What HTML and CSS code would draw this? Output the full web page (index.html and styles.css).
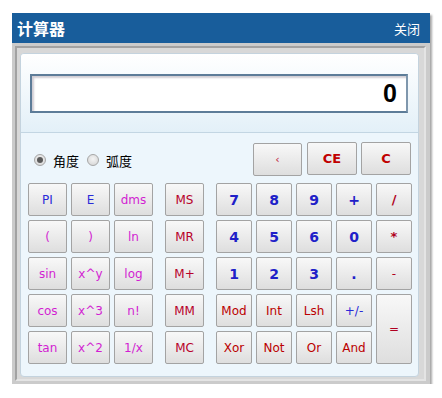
FILE: index.html
```html
<!DOCTYPE html>
<html lang="zh">
<head>
<meta charset="utf-8">
<title>计算器</title>
<link rel="stylesheet" href="styles.css">
</head>
<body>
<div class="window">
  <div class="titlebar">
    <span class="title">计算器</span>
    <span class="close">关闭</span>
  </div>
  <div class="wbody">
    <div class="frame">
      <div class="panel">
        <div class="screen-area">
          <div class="display">0</div>
        </div>
        <div class="keys-area">
          <div class="toprow">
            <div class="radios">
              <span class="radio checked"></span><span class="rlabel">角度</span>
              <span class="radio"></span><span class="rlabel">弧度</span>
            </div>
            <div class="edit-keys">
              <button class="btn back">‹</button>
              <button class="btn ce">CE</button>
              <button class="btn ce">C</button>
            </div>
          </div>
          <div class="grid">
            <button class="btn blue">PI</button>
            <button class="btn blue">E</button>
            <button class="btn mag">dms</button>
            <span></span>
            <button class="btn mem">MS</button>
            <span></span>
            <button class="btn num">7</button>
            <button class="btn num">8</button>
            <button class="btn num">9</button>
            <button class="btn num">+</button>
            <button class="btn opb">/</button>

            <button class="btn mag">(</button>
            <button class="btn mag">)</button>
            <button class="btn mag">ln</button>
            <span></span>
            <button class="btn mem">MR</button>
            <span></span>
            <button class="btn num">4</button>
            <button class="btn num">5</button>
            <button class="btn num">6</button>
            <button class="btn num">0</button>
            <button class="btn opb">*</button>

            <button class="btn mag">sin</button>
            <button class="btn mag">x^y</button>
            <button class="btn mag">log</button>
            <span></span>
            <button class="btn mem">M+</button>
            <span></span>
            <button class="btn num">1</button>
            <button class="btn num">2</button>
            <button class="btn num">3</button>
            <button class="btn num">.</button>
            <button class="btn op">-</button>

            <button class="btn mag">cos</button>
            <button class="btn mag">x^3</button>
            <button class="btn mag">n!</button>
            <span></span>
            <button class="btn mem">MM</button>
            <span></span>
            <button class="btn red">Mod</button>
            <button class="btn red">Int</button>
            <button class="btn red">Lsh</button>
            <button class="btn blue">+/-</button>
            <button class="btn op eq">=</button>

            <button class="btn mag">tan</button>
            <button class="btn mag">x^2</button>
            <button class="btn mag">1/x</button>
            <span></span>
            <button class="btn mem">MC</button>
            <span></span>
            <button class="btn red">Xor</button>
            <button class="btn red">Not</button>
            <button class="btn red">Or</button>
            <button class="btn red">And</button>
          </div>
        </div>
      </div>
    </div>
  </div>
</div>
</body>
</html>
```
FILE: styles.css
```css
html, body {
  margin: 0;
  padding: 0;
  background: #ffffff;
}
body {
  font-family: "DejaVu Sans", "Noto Sans CJK SC", sans-serif;
  font-size: 12px;
}
.window {
  margin: 13px 0 0 12px;
  width: 418px;
  box-shadow: 2px 2px 2px rgba(0, 0, 0, 0.35);
}
.titlebar {
  height: 30px;
  background: #185d9b;
  color: #ffffff;
  display: flex;
  align-items: center;
  justify-content: space-between;
  padding: 0 10px 0 5px;
  font-family: "Noto Sans CJK SC", sans-serif;
}
.title {
  font-size: 16px;
  font-weight: bold;
}
.close {
  font-size: 13px;
}
.wbody {
  background: #cbcbcb;
  padding: 3px 4px 3px 3px;
}
.frame {
  border: 2px solid;
  border-color: #a2a2a2 #e4e4e4 #e4e4e4 #a2a2a2;
  background: #d8d8d8;
  padding: 5px 5px 2px 3px;
}
.panel {
  border: 1px solid #c4d3de;
  border-radius: 4px;
  background: #edf6fc;
  overflow: hidden;
}
.screen-area {
  height: 79px;
  border-bottom: 1px solid #c3d6e3;
  background: linear-gradient(#ffffff, #e3f0f8);
  padding: 20px 0 0 9px;
  box-sizing: border-box;
}
.display {
  width: 378px;
  height: 39px;
  box-sizing: border-box;
  border: 2px solid #5d7c98;
  border-right-color: #7f97ad;
  background: #ffffff;
  box-shadow: inset 2px 2px 2px rgba(120, 110, 130, 0.35);
  font-family: "Liberation Sans", Arial, sans-serif;
  font-weight: bold;
  font-size: 25px;
  text-align: right;
  line-height: 35px;
  padding-right: 9px;
  color: #000000;
}
.keys-area {
  padding: 10px 6px 12px 7px;
}
.toprow {
  display: flex;
  justify-content: space-between;
  align-items: center;
  height: 32px;
  margin-bottom: 8px;
}
.radios {
  display: flex;
  align-items: center;
  padding-left: 6px;
  font-family: "Noto Sans CJK SC", sans-serif;
  font-size: 13px;
  color: #000;
  margin-top: 2px;
}
.radio {
  width: 12px;
  height: 12px;
  box-sizing: border-box;
  border-radius: 50%;
  border: 1px solid #a6a6a6;
  background: radial-gradient(circle at 50% 40%, #f4f4f4, #d2d2d2);
  position: relative;
  margin-right: 7px;
}
.radio.checked::after {
  content: "";
  position: absolute;
  left: 2px;
  top: 2px;
  width: 6px;
  height: 6px;
  border-radius: 50%;
  background: #5a5a5a;
}
.rlabel {
  margin-right: 8px;
}
.edit-keys {
  display: flex;
  gap: 4px;
  margin-right: 1px;
}
.btn {
  box-sizing: border-box;
  border: 1px solid #a3a3a3;
  border-radius: 2px;
  background: linear-gradient(#f8f8f8, #dedede);
  font-family: "DejaVu Sans", sans-serif;
  font-size: 12px;
  padding: 0;
  margin: 0;
  text-align: center;
}
.edit-keys .btn {
  width: 50px;
  height: 33px;
}
.edit-keys .back {
  width: 49px;
  margin-right: 1px;
  margin-top: 1px;
  color: #c0203a;
  font-size: 11px;
}
.ce {
  color: #c00000;
  font-weight: bold;
  font-size: 13px;
}
.grid {
  display: grid;
  grid-template-columns: 39px 39px 39px 4px 39px 4px 36px 36px 36px 36px 36px;
  grid-auto-rows: 33px;
  gap: 4px;
}
.grid .btn {
  width: 100%;
  height: 100%;
}
.blue { color: #2a2ad8; }
.mag { color: #d21ed2; }
.mem { color: #b8002a; }
.red { color: #bb0000; }
.num {
  color: #2020c8;
  font-weight: bold;
  font-size: 14px;
}
.opb {
  color: #b00020;
  font-weight: bold;
  font-size: 13px;
}
.op {
  color: #b00020;
}
.eq {
  grid-column: 11;
  grid-row: 4 / span 2;
}
```
